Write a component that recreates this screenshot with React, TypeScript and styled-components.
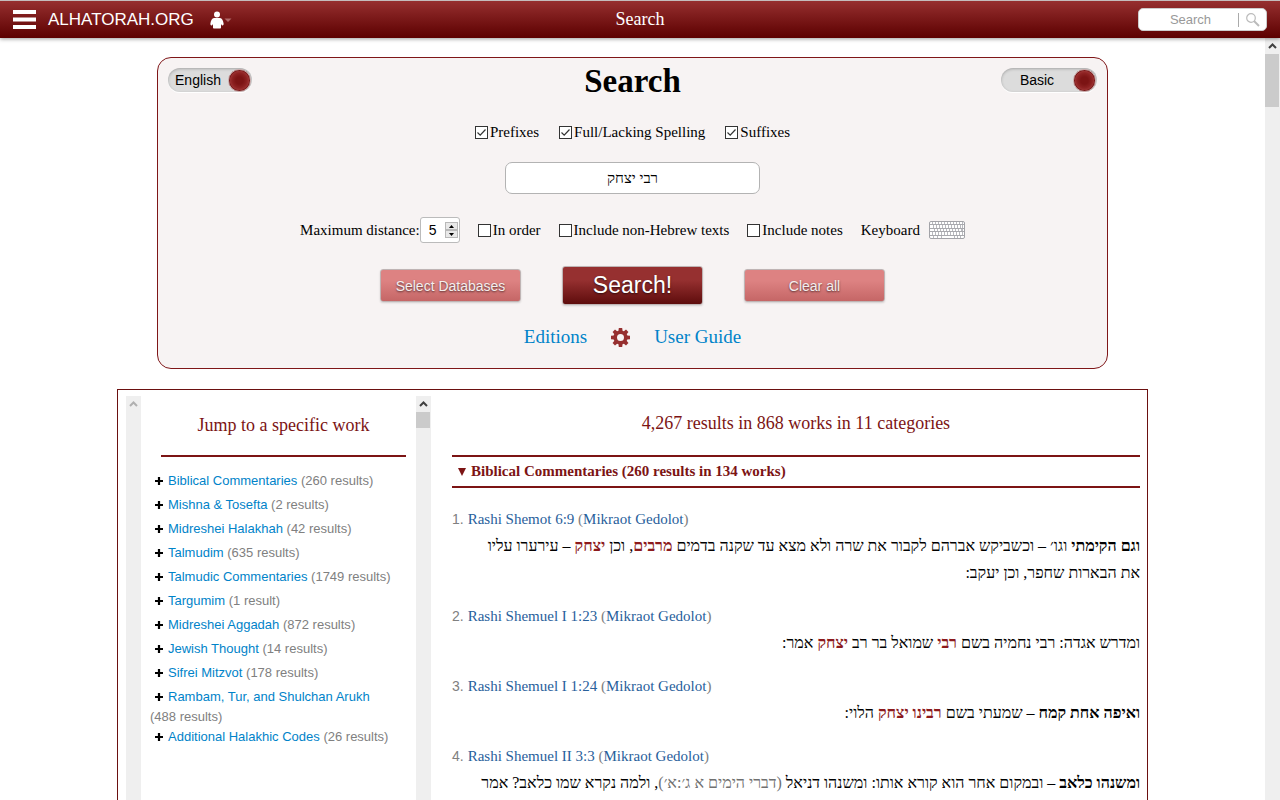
import React from "react";
import styled, { createGlobalStyle } from "styled-components";

const sans = `"Liberation Sans", Arial, sans-serif`;
const serif = `"Liberation Serif", "Times New Roman", serif`;

const GlobalStyle = createGlobalStyle`
  *, *::before, *::after { box-sizing: border-box; }
  body { margin: 0; background: #fff; color: #000; font-family: ${serif}; }
  button, input { font: inherit; margin: 0; }
  a { text-decoration: none; }
`;

const Page = styled.div`
  display: flex;
  flex-direction: column;
  height: 100vh;
  overflow: hidden;
`;

const Header = styled.header`
  display: grid;
  grid-template-columns: 1fr auto 1fr;
  align-items: center;
  flex: none;
  height: 38px;
  padding: 0 13px;
  border-top: 1px solid #c4bcbc;
  background: linear-gradient(#962f2f, #5c0000);
  box-shadow: 0 1px 4px rgba(0, 0, 0, 0.4);
  color: #fff;
  z-index: 1;
`;

const Brand = styled.div`
  display: flex;
  align-items: center;
  font: 17px ${sans};
`;

const IconButton = styled.button`
  display: flex;
  padding: 0;
  border: 0;
  background: none;
  color: inherit;
`;

const BrandLink = styled.a`
  margin: 0 16px 0 12px;
  color: #fff;
`;

const PageName = styled.span`
  font: 18px ${serif};
`;

const SiteSearch = styled.form`
  display: flex;
  align-items: center;
  justify-self: end;
  width: 129px;
  height: 23px;
  padding-right: 6px;
  border: 1px solid #ccc;
  border-radius: 5px;
  background: #fff;
`;

const SiteSearchInput = styled.input`
  flex: 1;
  min-width: 0;
  padding: 0 0 0 4px;
  border: 0;
  outline: 0;
  background: none;
  text-align: center;
  font: 13px ${sans};
  &::placeholder { color: #999; opacity: 1; }
`;

const SiteSearchButton = styled(IconButton)`
  padding-left: 7px;
  border-left: 1px solid #aaa;
`;

const Body = styled.div`
  display: flex;
  flex: 1;
  min-height: 0;
`;

const Main = styled.main`
  flex: 1;
  min-width: 0;
  overflow: hidden;
  padding-top: 19px;
`;

const Track = styled.div`
  display: flex;
  flex-direction: column;
  flex: none;
  width: 15px;
  background: #efefef;
`;

const Arrow = styled.span`
  display: flex;
  align-items: center;
  justify-content: center;
  height: 16px;
`;

const Thumb = styled.span<{ $length: number }>`
  height: ${(p) => p.$length}px;
  margin-right: 1px;
  background: #cbcbcb;
`;

const SearchCard = styled.form`
  display: flex;
  flex-direction: column;
  align-items: center;
  margin: 0 157px;
  padding: 3px 10px 19px;
  border: 1px solid #7f1618;
  border-radius: 14px;
  background: #f7f3f3;
`;

const CardTop = styled.div`
  display: grid;
  grid-template-columns: 1fr auto 1fr;
  align-items: center;
  width: 100%;
`;

const Title = styled.h1`
  margin: 0;
  font-size: 33px;
  line-height: 40px;
`;

const Toggle = styled.button<{ $wide?: boolean }>`
  display: flex;
  align-items: center;
  justify-self: ${(p) => (p.$wide ? "end" : "start")};
  width: ${(p) => (p.$wide ? 96 : 84)}px;
  height: 24px;
  margin-bottom: 2px;
  padding: 0 1px 0 0;
  border: 0;
  border-radius: 12px;
  background: #dcdcdc;
  box-shadow: inset 0 1px 3px rgba(0, 0, 0, 0.25), 0 1px 0 #fff;
  font: 14px ${sans};
`;

const ToggleText = styled.span`
  flex: 1;
  text-align: center;
`;

const Knob = styled.span`
  width: 23px;
  height: 23px;
  border-radius: 50%;
  background: radial-gradient(#7c1414 25%, #8e2222 50%, #9a3030 62%, #6b1010 70%);
  border: 1px solid #c9a4a4;
`;

const OptionRow = styled.div<{ $gap: number; $top: number }>`
  display: flex;
  align-items: center;
  gap: ${(p) => p.$gap}px;
  margin-top: ${(p) => p.$top}px;
  font-size: 15px;
  line-height: 20px;
`;

const CheckLabel = styled.label`
  display: flex;
  align-items: center;
  gap: 2px;
`;

const Checkbox = styled.input`
  appearance: none;
  width: 13px;
  height: 13px;
  border: 1px solid #333;
  background: #fff;
  &:checked {
    background: #fff
      url("data:image/svg+xml,%3Csvg xmlns='http://www.w3.org/2000/svg' viewBox='0 0 11 11'%3E%3Cpath d='M1.5 5.5l2.7 2.7L9.5 2.5' fill='none' stroke='%23333' stroke-width='1.2'/%3E%3C/svg%3E");
  }
`;

const QueryInput = styled.input`
  width: 255px;
  height: 32px;
  margin-top: 20px;
  border: 1px solid #b3b3b3;
  border-radius: 7px;
  background: #fff;
  text-align: center;
  font-size: 15px;
`;

const DistanceLabel = styled.label`
  display: flex;
  align-items: center;
`;

const Spinner = styled.span`
  display: flex;
  align-items: center;
  width: 40px;
  height: 26px;
  padding-right: 1px;
  border: 1px solid #bbb;
  border-radius: 3px;
  background: #fff;
`;

const SpinnerInput = styled.input`
  flex: 1;
  min-width: 0;
  padding: 0;
  border: 0;
  outline: 0;
  background: none;
  text-align: center;
  font: 14px ${sans};
`;

const StepButtons = styled.span`
  display: flex;
  flex-direction: column;
`;

const StepButton = styled.button`
  display: flex;
  align-items: center;
  justify-content: center;
  width: 13px;
  height: 8px;
  padding: 0;
  border: 1px solid #b8b8b8;
  background: #e8e8e8;
`;

const KeyboardLabel = styled.span`
  display: flex;
  align-items: center;
  gap: 9px;
`;

const ButtonRow = styled.div`
  display: flex;
  align-items: center;
  gap: 41px;
  margin-top: 23px;
`;

const ActionButton = styled.button<{ $primary?: boolean }>`
  width: 141px;
  height: ${(p) => (p.$primary ? 39 : 33)}px;
  padding: 0;
  border: 1px solid #bfb4b4;
  border-radius: 3px;
  background: ${(p) =>
    p.$primary
      ? "linear-gradient(#963030 35%, #5e0c0c)"
      : "linear-gradient(#dd8282 35%, #c56666)"};
  box-shadow: 0 1px 2px rgba(0, 0, 0, 0.15);
  color: ${(p) => (p.$primary ? "#fff" : "#f5eeee")};
  font: ${(p) => (p.$primary ? 23 : 14)}px ${sans};
  text-shadow: 0 1px 2px rgba(0, 0, 0, 0.6);
`;

const LinkRow = styled.nav`
  display: flex;
  align-items: center;
  gap: 24px;
  margin-top: 20px;
  font-size: 19px;
  line-height: 24px;
  color: #962f2f;
`;

const TextLink = styled.a`
  color: #0083c9;
`;

const Results = styled.section`
  display: flex;
  min-height: 600px;
  margin: 20px 117px 0;
  padding: 6px 7px 0 8px;
  border: 1px solid #6b1010;
`;

const Sidebar = styled.aside`
  width: 275px;
  padding: 0 10px 0 9px;
`;

const SidebarTitle = styled.h2`
  margin: 0 0 14px 11px;
  padding: 17px 0 18px;
  border-bottom: 2px solid #7c1414;
  color: #7c1414;
  text-align: center;
  font-size: 18px;
  font-weight: 400;
  line-height: 24px;
`;

const WorkList = styled.ul`
  margin: 0;
  padding: 0;
  list-style: none;
  color: #808080;
  font: 13px/16px ${sans};
`;

const Work = styled.li`
  margin-bottom: 2px;
`;

const WorkCount = styled.span`
  white-space: nowrap;
`;

const ExpandButton = styled.button`
  display: inline-flex;
  align-items: center;
  justify-content: center;
  width: 18px;
  height: 22px;
  padding: 0 0 2px;
  border: 0;
  background: none;
  vertical-align: middle;
`;

const Listing = styled.div`
  flex: 1;
  min-width: 0;
  padding-left: 21px;
`;

const Summary = styled.p`
  margin: 0;
  padding: 15px 0 20px;
  color: #7c1414;
  text-align: center;
  font-size: 18px;
  line-height: 24px;
`;

const Category = styled.h3`
  display: flex;
  align-items: center;
  gap: 5px;
  margin: 0 0 18px;
  padding: 4px 6px;
  border: solid #7c1414;
  border-width: 2px 0;
  color: #7c1414;
  font-size: 15px;
  line-height: 21px;
`;

const HitList = styled.ol`
  margin: 0;
  padding: 0;
  list-style: none;
`;

const Hit = styled.li`
  margin-bottom: 17px;
`;

const HitSource = styled.div`
  display: flex;
  gap: 4px;
  color: #808080;
  font-size: 15px;
  line-height: 26px;
`;

const HitNumber = styled.span`
  font: 14px/26px ${sans};
`;

const SourceLink = styled.a`
  color: #28609b;
`;

const HitText = styled.p`
  margin: 0;
  padding-left: 16px;
  font-size: 16px;
  line-height: 27px;
`;

const Match = styled.b`
  color: #8c1a1c;
`;

const Citation = styled.span`
  color: #707070;
`;

const UpArrow = ({ color }: { color: string }) => (
  <Arrow>
    <svg width="9" height="6" viewBox="0 0 9 6" aria-hidden="true">
      <path d="M1 5l3.500-3.500L8 5" fill="none" stroke={color} strokeWidth="2" />
    </svg>
  </Arrow>
);

const Plus = () => (
  <svg width="8" height="8" viewBox="0 0 8 8" aria-hidden="true">
    <path d="M4 0v8M0 4h8" stroke="#000" strokeWidth="2.200" />
  </svg>
);

const teeth = [0, 45, 90, 135, 180, 225, 270, 315];

const Gear = () => (
  <svg width="19" height="19" viewBox="0 0 19 19" aria-hidden="true">
    <circle cx="9.500" cy="9.500" r="5.300" fill="none" stroke="currentColor" strokeWidth="3.600" />
    {teeth.map((a) => (
      <path key={a} d="M7.400 3.500L7.800 0h3.400l.4 3.500z" fill="currentColor" transform={`rotate(${a} 9.500 9.500)`} />
    ))}
  </svg>
);

const keyRows = [
  { y: 1, height: 2, shift: 0 },
  { y: 4, height: 3, shift: 1 },
  { y: 8, height: 2, shift: 2 },
  { y: 11, height: 3, shift: 0 },
];
const keyCols = [0, 1, 2, 3, 4, 5, 6, 7, 8, 9, 10];

const KeyboardIcon = () => (
  <svg width="36" height="18" viewBox="0 0 36 18" aria-hidden="true">
    <rect x="0.500" y="0.500" width="35" height="17" rx="1.500" fill="#fff" stroke="#a3a3a8" />
    <path d="M1 3.500h34M1 7.500h34M1 10.500h34M1 14.500h34" stroke="#a9a9ae" />
    {keyRows.map((r) =>
      keyCols.map((c) => (
        <rect key={`${r.y}-${c}`} x={3 + c * 3 + (c === 10 ? 0 : r.shift)} y={r.y} width="1" height={r.height} fill="#b9b9be" />
      ))
    )}
    <path d="M4.500 15v2M8.500 15v2M12.500 15v2M25.500 15v2M28.500 15v2M31.500 15v2" stroke="#b9b9be" />
  </svg>
);

const works: [string, string][] = [
  ["Biblical Commentaries", "260 results"],
  ["Mishna & Tosefta", "2 results"],
  ["Midreshei Halakhah", "42 results"],
  ["Talmudim", "635 results"],
  ["Talmudic Commentaries", "1749 results"],
  ["Targumim", "1 result"],
  ["Midreshei Aggadah", "872 results"],
  ["Jewish Thought", "14 results"],
  ["Sifrei Mitzvot", "178 results"],
  ["Rambam, Tur, and Shulchan Arukh", "488 results"],
  ["Additional Halakhic Codes", "26 results"],
];

const hits: { source: string; text: React.ReactNode }[] = [
  {
    source: "Rashi Shemot 6:9",
    text: (
      <>
        <b>וגם הקימתי</b> וגו׳ – וכשביקש אברהם לקבור את שרה ולא מצא עד שקנה בדמים <Match>מרבים</Match>, וכן{" "}
        <Match>יצחק</Match> – עירערו עליו את הבארות שחפר, וכן יעקב:
      </>
    ),
  },
  {
    source: "Rashi Shemuel I 1:23",
    text: (
      <>
        ומדרש אגדה: רבי נחמיה בשם <Match>רבי</Match> שמואל בר רב <Match>יצחק</Match> אמר:
      </>
    ),
  },
  {
    source: "Rashi Shemuel I 1:24",
    text: (
      <>
        <b>ואיפה אחת קמח</b> – שמעתי בשם <Match>רבינו יצחק</Match> הלוי:
      </>
    ),
  },
  {
    source: "Rashi Shemuel II 3:3",
    text: (
      <>
        <b>ומשנהו כלאב</b> – ובמקום אחר הוא קורא אותו: ומשנהו דניאל <Citation>(דברי הימים א ג׳:א׳)</Citation>, ולמה
        נקרא שמו כלאב? אמר
      </>
    ),
  },
];

const Check = ({ label, checked }: { label: string; checked?: boolean }) => (
  <CheckLabel>
    <Checkbox type="checkbox" defaultChecked={checked} />
    {label}
  </CheckLabel>
);

export default function App() {
  return (
    <Page>
      <GlobalStyle />
      <Header>
        <Brand>
          <IconButton type="button" aria-label="Menu">
            <svg width="23" height="19" viewBox="0 0 23 19" aria-hidden="true">
              <path d="M0 2h23M0 9.500h23M0 17h23" stroke="#fff" strokeWidth="4" />
            </svg>
          </IconButton>
          <BrandLink href="#home">ALHATORAH.ORG</BrandLink>
          <IconButton type="button" aria-label="Account">
            <svg width="22" height="18" viewBox="0 0 22 18" aria-hidden="true">
              <circle cx="7" cy="3.500" r="3" fill="#fff" />
              <path
                d="M4 7h6c2 0 3.200 2.500 3.600 5.500.2 1.500-.8 2.300-1.800 1.700L11 13v3.500c0 .8-.5 1-1 1H4c-.5 0-1-.2-1-1V13l-.8 1.200C1.200 14.800.2 14 .4 12.500.800 9.500 2 7 4 7z"
                fill="#fff"
              />
              <path d="M14.500 7.500h7L18 11z" fill="#b06a6a" />
            </svg>
          </IconButton>
        </Brand>
        <PageName>Search</PageName>
        <SiteSearch role="search">
          <SiteSearchInput type="text" placeholder="Search" aria-label="Search the site" />
          <SiteSearchButton type="button" aria-label="Go">
            <svg width="14" height="14" viewBox="0 0 14 14" aria-hidden="true">
              <circle cx="5" cy="5" r="4.300" fill="none" stroke="#bbb" strokeWidth="1.200" />
              <path d="M8 8l5 5" stroke="#bbb" strokeWidth="2" />
            </svg>
          </SiteSearchButton>
        </SiteSearch>
      </Header>
      <Body>
        <Main>
          <SearchCard>
            <CardTop>
              <Toggle type="button">
                <ToggleText>English</ToggleText>
                <Knob />
              </Toggle>
              <Title>Search</Title>
              <Toggle type="button" $wide>
                <ToggleText>Basic</ToggleText>
                <Knob />
              </Toggle>
            </CardTop>
            <OptionRow $gap={20} $top={21}>
              <Check label="Prefixes" checked />
              <Check label="Full/Lacking Spelling" checked />
              <Check label="Suffixes" checked />
            </OptionRow>
            <QueryInput type="text" dir="rtl" lang="he" aria-label="Search text" defaultValue="רבי יצחק" />
            <OptionRow $gap={18} $top={23}>
              <DistanceLabel>
                Maximum distance:
                <Spinner>
                  <SpinnerInput type="text" inputMode="numeric" defaultValue="5" />
                  <StepButtons>
                    <StepButton type="button" aria-label="Increase">
                      <svg width="5" height="3" viewBox="0 0 5 3" aria-hidden="true">
                        <path d="M0 3L2.500 0 5 3z" fill="#000" />
                      </svg>
                    </StepButton>
                    <StepButton type="button" aria-label="Decrease">
                      <svg width="5" height="3" viewBox="0 0 5 3" aria-hidden="true">
                        <path d="M0 0l2.500 3L5 0z" fill="#000" />
                      </svg>
                    </StepButton>
                  </StepButtons>
                </Spinner>
              </DistanceLabel>
              <Check label="In order" />
              <Check label="Include non-Hebrew texts" />
              <Check label="Include notes" />
              <KeyboardLabel>
                Keyboard
                <IconButton type="button" aria-label="Open keyboard">
                  <KeyboardIcon />
                </IconButton>
              </KeyboardLabel>
            </OptionRow>
            <ButtonRow>
              <ActionButton type="button">Select Databases</ActionButton>
              <ActionButton type="submit" $primary>
                Search!
              </ActionButton>
              <ActionButton type="reset">Clear all</ActionButton>
            </ButtonRow>
            <LinkRow>
              <TextLink href="#editions">Editions</TextLink>
              <IconButton type="button" aria-label="Settings">
                <Gear />
              </IconButton>
              <TextLink href="#guide">User Guide</TextLink>
            </LinkRow>
          </SearchCard>
          <Results>
            <Track aria-hidden="true">
              <UpArrow color="#b0b0b0" />
            </Track>
            <Sidebar>
              <SidebarTitle>Jump to a specific work</SidebarTitle>
              <WorkList>
                {works.map(([name, count]) => (
                  <Work key={name}>
                    <ExpandButton type="button" aria-label={`Expand ${name}`}>
                      <Plus />
                    </ExpandButton>
                    <TextLink href="#work">{name}</TextLink> <WorkCount>({count})</WorkCount>
                  </Work>
                ))}
              </WorkList>
            </Sidebar>
            <Track aria-hidden="true">
              <UpArrow color="#404040" />
              <Thumb $length={16} />
            </Track>
            <Listing>
              <Summary>4,267 results in 868 works in 11 categories</Summary>
              <Category>
                <svg width="8" height="8" viewBox="0 0 8 8" aria-hidden="true">
                  <path d="M0 0h8L4 8z" fill="#7c1414" />
                </svg>
                Biblical Commentaries (260 results in 134 works)
              </Category>
              <HitList>
                {hits.map((hit, i) => (
                  <Hit key={hit.source}>
                    <HitSource>
                      <HitNumber>{i + 1}.</HitNumber>
                      <span>
                        <SourceLink href="#source">{hit.source}</SourceLink> (
                        <SourceLink href="#edition">Mikraot Gedolot</SourceLink>)
                      </span>
                    </HitSource>
                    <HitText dir="rtl" lang="he">
                      {hit.text}
                    </HitText>
                  </Hit>
                ))}
              </HitList>
            </Listing>
          </Results>
        </Main>
        <Track aria-hidden="true">
          <UpArrow color="#404040" />
          <Thumb $length={53} />
        </Track>
      </Body>
    </Page>
  );
}
